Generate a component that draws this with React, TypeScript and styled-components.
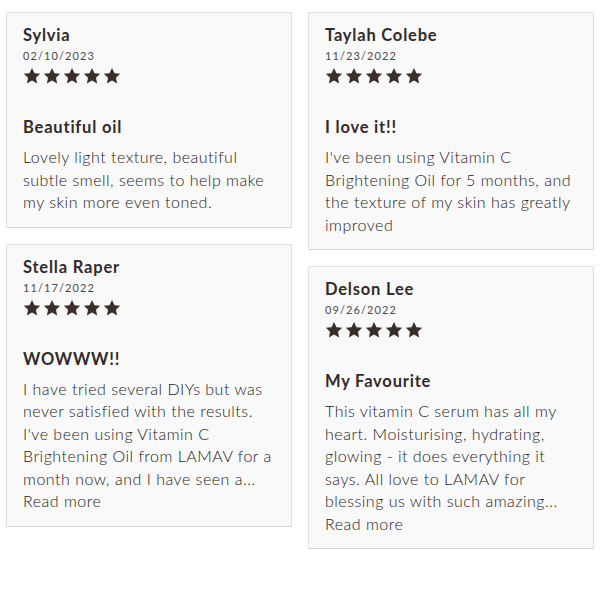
import React from 'react';
import styled, { createGlobalStyle } from 'styled-components';

const GlobalStyle = createGlobalStyle`
  body {
    margin: 0;
    background: #ffffff;
    font-family: Lato, 'Open Sans', sans-serif;
  }
`;

interface Review {
  name: string;
  date: string;
  title: string;
  body: string;
  truncated?: boolean;
}

const leftColumn: Review[] = [
  {
    name: 'Sylvia',
    date: '02/10/2023',
    title: 'Beautiful oil',
    body: 'Lovely light texture, beautiful subtle smell, seems to help make my skin more even toned.',
  },
  {
    name: 'Stella Raper',
    date: '11/17/2022',
    title: 'WOWWW!!',
    body: "I have tried several DIYs but was never satisfied with the results. I've been using Vitamin C Brightening Oil from LAMAV for a month now, and I have seen a...",
    truncated: true,
  },
];

const rightColumn: Review[] = [
  {
    name: 'Taylah Colebe',
    date: '11/23/2022',
    title: 'I love it!!',
    body: "I've been using Vitamin C Brightening Oil for 5 months, and the texture of my skin has greatly improved",
  },
  {
    name: 'Delson Lee',
    date: '09/26/2022',
    title: 'My Favourite',
    body: 'This vitamin C serum has all my heart. Moisturising, hydrating, glowing - it does everything it says. All love to LAMAV for blessing us with such amazing...',
    truncated: true,
  },
];

const Grid = styled.div`
  display: grid;
  grid-template-columns: 286px 286px;
  column-gap: 16px;
  padding: 12px 0 0 6px;
  align-items: start;
`;

const Column = styled.div`
  display: flex;
  flex-direction: column;
  gap: 16px;
`;

const CardBox = styled.div`
  background: #f9f9f9;
  border: 1px solid #e2e2e2;
  border-bottom-color: #d6d6d6;
  padding: 11px 16px 13px 16px;
  color: #333333;
`;

const Name = styled.div`
  font-size: 16.5px;
  font-weight: 700;
  line-height: 22px;
  letter-spacing: 0.8px;
  color: #332b2a;
`;

const DateText = styled.div`
  margin-top: 3px;
  font-size: 11px;
  line-height: 14px;
  letter-spacing: 1.1px;
  color: #4f4a49;
`;

const Stars = styled.div`
  display: flex;
  gap: 2px;
  margin-top: 3px;
  height: 20px;
  align-items: center;
`;

const Title = styled.div`
  margin-top: 30px;
  font-size: 16.5px;
  font-weight: 700;
  line-height: 22px;
  letter-spacing: 0.8px;
  color: #332b2a;
`;

const Body = styled.p`
  margin: 8px 0 0 0;
  font-size: 16px;
  font-weight: 300;
  line-height: 22.5px;
  letter-spacing: 0.5px;
  color: #272121;
`;

const ReadMore = styled.span`
  display: block;
  cursor: pointer;
`;

const Star = () => (
  <svg width="18" height="18" viewBox="0 0 24 24">
    <path
      d="M12 1.2l3.3 7 7.6.9-5.6 5.2 1.5 7.6L12 18.1l-6.8 3.8 1.5-7.6L1.1 9.1l7.6-.9z"
      fill="#3b2f2c"
    />
  </svg>
);

const ReviewCard: React.FC<{ review: Review }> = ({ review }) => (
  <CardBox>
    <Name>{review.name}</Name>
    <DateText>{review.date}</DateText>
    <Stars>
      {[0, 1, 2, 3, 4].map(i => (
        <Star key={i} />
      ))}
    </Stars>
    <Title>{review.title}</Title>
    <Body>
      {review.body}
      {review.truncated && <ReadMore>Read more</ReadMore>}
    </Body>
  </CardBox>
);

export default function App() {
  return (
    <>
      <GlobalStyle />
      <Grid>
        <Column>
          {leftColumn.map(r => (
            <ReviewCard key={r.name} review={r} />
          ))}
        </Column>
        <Column>
          {rightColumn.map(r => (
            <ReviewCard key={r.name} review={r} />
          ))}
        </Column>
      </Grid>
    </>
  );
}
